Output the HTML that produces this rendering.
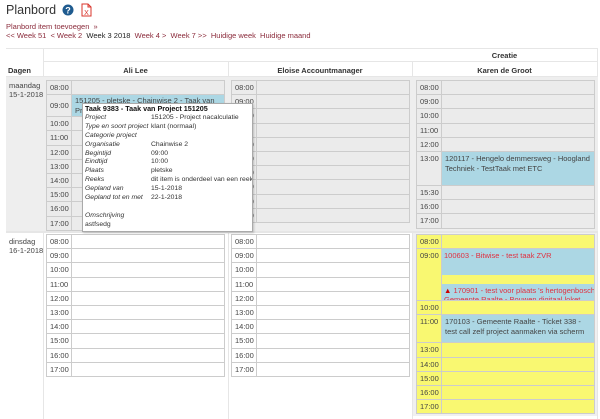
<!DOCTYPE html>
<html><head><meta charset="utf-8"><style>
*{margin:0;padding:0;box-sizing:border-box}
body{width:600px;height:419px;background:#fff;font-family:"Liberation Sans",sans-serif;font-size:7.5px;color:#333;position:relative;overflow:hidden}
.a{position:absolute}
a,.lnk{color:#8b2b3b;text-decoration:none}
table.t{position:absolute;border-collapse:collapse;table-layout:fixed}
table.t td{border:1px solid #ccc;height:14.2px;padding:0 0 0 3px;vertical-align:middle;font-size:7.5px;color:#444;white-space:nowrap;overflow:hidden}
.g td{background:#ebebeb}
.w td{background:#fff}
.y td{background:#f9f871}
.b{background:#acd7e4!important;vertical-align:top!important;white-space:normal!important;line-height:10px;padding-top:2px!important}
.red{color:#e03040}
.hd{position:absolute;font-weight:bold;font-size:7.5px;color:#333;text-align:center}
.tt td{white-space:nowrap;padding:0;overflow:hidden}
</style></head><body>
<div class="a" style="left:6px;top:3px;font-size:12.5px;color:#333">Planbord</div>
<svg class="a" style="left:62px;top:4px" width="12" height="12"><circle cx="6" cy="6" r="5.5" fill="#1f5b8f"/><text x="6" y="9.5" font-size="9" font-weight="bold" fill="#fff" text-anchor="middle" font-family="Liberation Sans">?</text></svg>
<svg class="a" style="left:81px;top:3px" width="11" height="14"><path d="M1 1H7L10 4V13H1Z" fill="#fff" stroke="#d9342b" stroke-width="1"/><path d="M7 1V4H10" fill="none" stroke="#d9342b"/><text x="5.5" y="12" font-size="7" fill="#d9342b" text-anchor="middle" font-family="Liberation Sans">X</text></svg>
<div class="a lnk" style="left:6px;top:22px;font-size:7.5px">Planbord item toevoegen &nbsp;»</div>
<div class="a" style="left:6px;top:31px;font-size:7.5px"><span class="lnk">&lt;&lt; Week 51 &nbsp;&lt; Week 2</span> &nbsp;<span style="color:#222">Week 3 2018</span> &nbsp;<span class="lnk">Week 4 &gt; &nbsp;Week 7 &gt;&gt; &nbsp;Huidige week &nbsp;Huidige maand</span></div>

<div class="a" style="left:6px;top:48px;width:592px;height:371px;background:#fff;border-top:1px solid #e6e6e6"></div>
<div class="a" style="left:43px;top:48px;width:1px;height:371px;background:#e6e6e6"></div>
<div class="a" style="left:228px;top:62px;width:1px;height:357px;background:#e6e6e6"></div>
<div class="a" style="left:412px;top:62px;width:1px;height:357px;background:#e6e6e6"></div>
<div class="a" style="left:597px;top:48px;width:1px;height:371px;background:#e6e6e6"></div>
<div class="a" style="left:43px;top:61px;width:555px;height:1px;background:#e6e6e6"></div>
<div class="a" style="left:6px;top:76px;width:592px;height:1px;background:#e6e6e6"></div>
<div class="hd" style="left:412px;top:51px;width:185px">Creatie</div>
<div class="hd" style="left:43px;top:66px;width:185px">Ali Lee</div>
<div class="hd" style="left:228px;top:66px;width:184px">Eloise Accountmanager</div>
<div class="hd" style="left:412px;top:66px;width:185px">Karen de Groot</div>
<div class="hd" style="left:8px;top:66px;text-align:left">Dagen</div>

<div class="a" style="left:6px;top:77px;width:592px;height:154px;background:#eee"></div>
<div class="a" style="left:6px;top:231px;width:592px;height:2px;background:#e6e6e6"></div>
<div class="a" style="left:9px;top:81px;line-height:9px;color:#444">maandag<br>15-1-2018</div>
<div class="a" style="left:9px;top:237px;line-height:9px;color:#444">dinsdag<br>16-1-2018</div>

<table class="t g" style="left:46px;top:80px;width:179px"><col style="width:25px"><col>
<tr><td>08:00</td><td></td></tr>
<tr><td>09:00</td><td class="b red" style="padding-top:1px!important">151205 - pletske - Chainwise 2 - Taak van Project</td></tr>
<tr><td>10:00</td><td></td></tr><tr><td>11:00</td><td></td></tr><tr><td>12:00</td><td></td></tr><tr><td>13:00</td><td></td></tr><tr><td>14:00</td><td></td></tr><tr><td>15:00</td><td></td></tr><tr><td>16:00</td><td></td></tr><tr><td>17:00</td><td></td></tr></table>

<table class="t g" style="left:231px;top:80px;width:179px"><col style="width:25px"><col>
<tr><td>08:00</td><td></td></tr><tr><td>09:00</td><td></td></tr><tr><td>10:00</td><td></td></tr><tr><td>11:00</td><td></td></tr><tr><td>12:00</td><td></td></tr><tr><td>13:00</td><td></td></tr><tr><td>14:00</td><td></td></tr><tr><td>15:00</td><td></td></tr><tr><td>16:00</td><td></td></tr><tr><td>17:00</td><td></td></tr></table>

<table class="t g" style="left:416px;top:80px;width:179px"><col style="width:25px"><col>
<tr><td>08:00</td><td></td></tr><tr><td>09:00</td><td></td></tr><tr><td>10:00</td><td></td></tr><tr><td>11:00</td><td></td></tr><tr><td>12:00</td><td></td></tr>
<tr><td style="height:34px;vertical-align:top;padding-top:2px">13:00</td><td class="b">120117 - Hengelo demmersweg - Hoogland Techniek - TestTaak met ETC</td></tr>
<tr><td>15:30</td><td></td></tr><tr><td>16:00</td><td></td></tr><tr><td>17:00</td><td></td></tr></table>

<table class="t w" style="left:46px;top:234px;width:179px"><col style="width:25px"><col>
<tr><td>08:00</td><td></td></tr><tr><td>09:00</td><td></td></tr><tr><td>10:00</td><td></td></tr><tr><td>11:00</td><td></td></tr><tr><td>12:00</td><td></td></tr><tr><td>13:00</td><td></td></tr><tr><td>14:00</td><td></td></tr><tr><td>15:00</td><td></td></tr><tr><td>16:00</td><td></td></tr><tr><td>17:00</td><td></td></tr></table>
<table class="t w" style="left:231px;top:234px;width:179px"><col style="width:25px"><col>
<tr><td>08:00</td><td></td></tr><tr><td>09:00</td><td></td></tr><tr><td>10:00</td><td></td></tr><tr><td>11:00</td><td></td></tr><tr><td>12:00</td><td></td></tr><tr><td>13:00</td><td></td></tr><tr><td>14:00</td><td></td></tr><tr><td>15:00</td><td></td></tr><tr><td>16:00</td><td></td></tr><tr><td>17:00</td><td></td></tr></table>

<div class="a" style="left:413px;top:233px;width:184px;height:183px;background:#f0f0f0"></div>
<table class="t y" style="left:416px;top:234px;width:179px"><col style="width:25px"><col>
<tr><td>08:00</td><td></td></tr>
<tr><td style="height:52px;vertical-align:top;padding-top:2px">09:00</td><td style="padding:0;position:relative;vertical-align:top">
<div style="background:#acd7e4;height:26px;padding:2px 0 0 2px;color:#e03040">100603 - Bitwise - test taak ZVR</div>
<div style="height:9px"></div>
<div style="background:#acd7e4;height:16px;padding:2px 0 0 2px;color:#e03040;overflow:hidden;line-height:9px;white-space:nowrap"><span style="color:#c00">▲</span> 170901 - test voor plaats 's hertogenbosch -<br>Gemeente Raalte - Bouwen digitaal loket</div></td></tr>
<tr><td>10:00</td><td></td></tr>
<tr><td style="height:28px;vertical-align:top;padding-top:2px">11:00</td><td class="b">170103 - Gemeente Raalte - Ticket 338 - test call zelf project aanmaken via scherm</td></tr>
<tr><td>13:00</td><td></td></tr><tr><td>14:00</td><td></td></tr><tr><td>15:00</td><td></td></tr><tr><td>16:00</td><td></td></tr><tr><td>17:00</td><td></td></tr></table>

<div class="a" style="left:82px;top:103px;width:171px;height:129px;background:#fff;border:1px solid #aaa;box-shadow:1px 1px 2px rgba(0,0,0,.2);padding:1px 2px;line-height:8.9px;font-size:7.2px;color:#333;overflow:hidden">
<div style="font-weight:bold;color:#111;white-space:nowrap">Taak 9383 - Taak van Project 151205</div>
<table class="tt" style="border-collapse:collapse;table-layout:fixed;width:167px;font-size:6.8px;line-height:8.9px;color:#333"><col style="width:66px"><col>
<tr><td><i>Project</i></td><td>151205 - Project nacalculatie</td></tr>
<tr><td><i>Type en soort project</i></td><td>klant (normaal)</td></tr>
<tr><td><i>Categorie project</i></td><td></td></tr>
<tr><td><i>Organisatie</i></td><td>Chainwise 2</td></tr>
<tr><td><i>Begintijd</i></td><td>09:00</td></tr>
<tr><td><i>Eindtijd</i></td><td>10:00</td></tr>
<tr><td><i>Plaats</i></td><td>pletske</td></tr>
<tr><td><i>Reeks</i></td><td>dit item is onderdeel van een reeks</td></tr>
<tr><td><i>Gepland van</i></td><td>15-1-2018</td></tr>
<tr><td><i>Gepland tot en met</i></td><td>22-1-2018</td></tr>
<tr><td>&nbsp;</td><td></td></tr>
<tr><td><i>Omschrijving</i></td><td></td></tr>
<tr><td>astfsedg</td><td></td></tr></table></div>
</body></html>
